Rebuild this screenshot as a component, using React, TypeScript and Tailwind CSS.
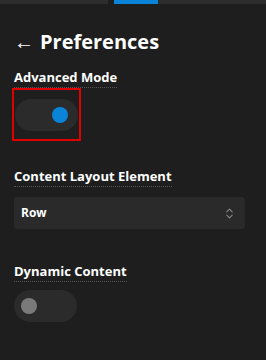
import { ChevronsUpDown } from "lucide-react";

function Toggle({ on }: { on: boolean }) {
  return (
    <div className="flex h-[32px] w-[63px] items-center rounded-full bg-[#2b2b2b] px-[7px]">
      <div
        className={
          on
            ? "ml-auto mr-[3px] h-[16px] w-[16px] rounded-full bg-[#0a84d8]"
            : "h-[16px] w-[16px] rounded-full bg-[#7a7a7a]"
        }
      />
    </div>
  );
}

function Label({ children }: { children: string }) {
  return (
    <div className="border-b border-dotted border-[#555] pb-[2px] text-[13px] font-bold leading-[16px] text-white">
      {children}
    </div>
  );
}

export default function App() {
  return (
    <main className="h-[360px] w-[266px] overflow-hidden bg-[#1e1e1e] font-['Open_Sans',sans-serif]">
      <div className="flex h-[4px]">
        <div className="w-[108px] bg-[#2d2d2d]" />
        <div className="w-[6px]" />
        <div className="w-[44px] bg-[#0a84d8]" />
        <div className="flex-1 bg-[#2d2d2d]" />
      </div>

      <div className="px-[14px]">
        <h1 className="mt-[24px] flex items-center gap-[6px] text-[20px] font-bold leading-[28px] text-white">
          <span className="font-normal">←</span>
          <span>Preferences</span>
        </h1>

        <div className="mt-[13px] flex flex-col items-start">
          <Label>Advanced Mode</Label>
          <div className="-ml-[2px] flex border-[2px] border-[#e00000] px-[1px] pb-[8px] pt-[9px]">
            <Toggle on />
          </div>
        </div>

        <div className="mt-[27px] flex flex-col items-start">
          <Label>Content Layout Element</Label>
        </div>
        <div className="mt-[10px] flex h-[32px] w-[231px] items-center justify-between rounded-[4px] bg-[#2a2a2a] pl-[7px] pr-[9px]">
          <span className="text-[12px] font-bold text-white">Row</span>
          <ChevronsUpDown size={13} className="text-[#888]" strokeWidth={2} />
        </div>

        <div className="mt-[34px] flex flex-col items-start">
          <Label>Dynamic Content</Label>
          <div className="mt-[8px]">
            <Toggle on={false} />
          </div>
        </div>
      </div>
    </main>
  );
}
